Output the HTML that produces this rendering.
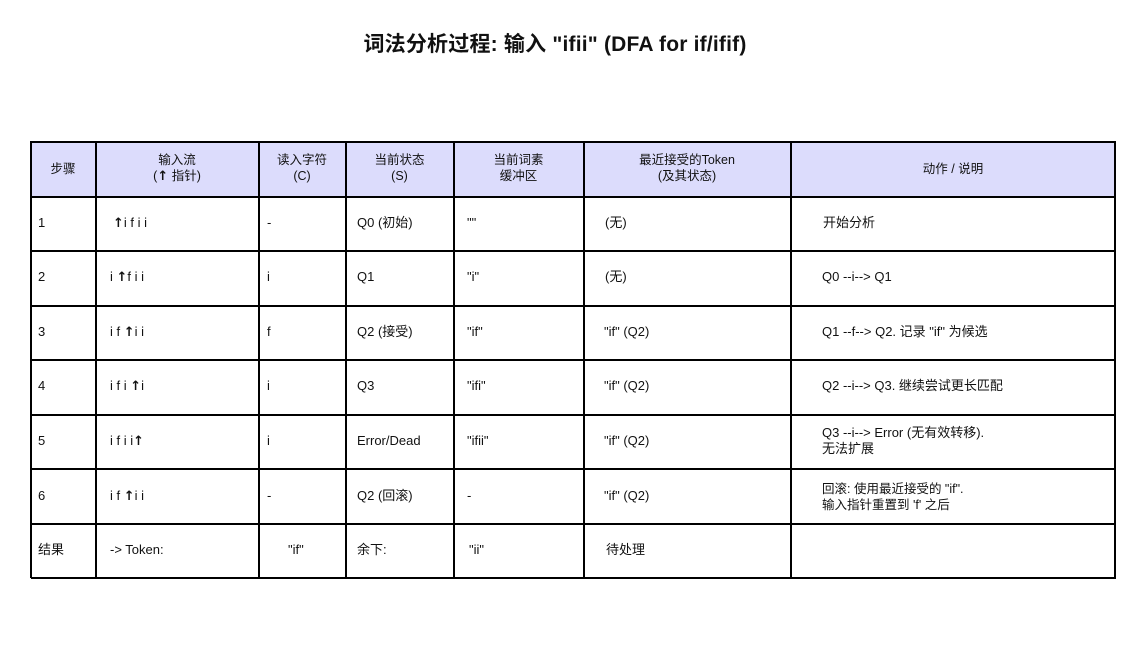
<!DOCTYPE html>
<html><head><meta charset="utf-8"><style>
body{margin:0;width:1145px;height:663px;background:#fff;position:relative;font-family:"Liberation Sans","Noto Sans CJK SC",sans-serif;color:#111;overflow:hidden}
.t{position:absolute;font-size:13px;white-space:nowrap;line-height:16px}
.h{position:absolute;font-size:12.5px;text-align:center;line-height:16px}
.v{position:absolute;top:141px;height:437px;width:1.5px;background:#000}
.r{position:absolute;left:31px;width:1085px;height:1.5px;background:#000}
b{font-family:"DejaVu Sans",sans-serif;font-size:13px}
</style></head><body>
<div style="position:absolute;top:28px;left:0;width:1110px;text-align:center;font-size:21px;font-weight:bold;letter-spacing:0.2px">词法分析过程: 输入 "ifii" (DFA for if/ifif)</div>
<div style="position:absolute;left:31px;top:141px;width:1084px;height:55px;background:#dcdcfc"></div>
<div class="r" style="top:141px"></div><div class="r" style="top:196px"></div><div class="r" style="top:250px"></div><div class="r" style="top:305px"></div><div class="r" style="top:359px"></div><div class="r" style="top:414px"></div><div class="r" style="top:468px"></div><div class="r" style="top:523px"></div><div class="r" style="top:577px"></div>
<div class="v" style="left:30px"></div><div class="v" style="left:95px"></div><div class="v" style="left:258px"></div><div class="v" style="left:345px"></div><div class="v" style="left:453px"></div><div class="v" style="left:583px"></div><div class="v" style="left:790px"></div><div class="v" style="left:1114px"></div>
<div class="h" style="left:31px;width:64px;top:161px">步骤</div>
<div class="h" style="left:96px;width:162px;top:152px">输入流<br>(<b>↑</b> 指针)</div>
<div class="h" style="left:259px;width:86px;top:152px">读入字符<br>(C)</div>
<div class="h" style="left:346px;width:107px;top:152px">当前状态<br>(S)</div>
<div class="h" style="left:454px;width:129px;top:152px">当前词素<br>缓冲区</div>
<div class="h" style="left:584px;width:206px;top:152px">最近接受的Token<br>(及其状态)</div>
<div class="h" style="left:791px;width:324px;top:161px">动作 / 说明</div>

<div class="t" style="left:38px;top:215px">1</div><div class="t" style="left:113px;top:215px"><b>↑</b>i f i i</div><div class="t" style="left:267px;top:215px">-</div><div class="t" style="left:357px;top:215px">Q0 (初始)</div><div class="t" style="left:467px;top:215px">""</div><div class="t" style="left:605px;top:215px">(无)</div><div class="t" style="left:823px;top:215px">开始分析</div>
<div class="t" style="left:38px;top:269px">2</div><div class="t" style="left:110px;top:269px">i <b>↑</b>f i i</div><div class="t" style="left:267px;top:269px">i</div><div class="t" style="left:357px;top:269px">Q1</div><div class="t" style="left:467px;top:269px">"i"</div><div class="t" style="left:605px;top:269px">(无)</div><div class="t" style="left:822px;top:269px">Q0 --i--&gt; Q1</div>
<div class="t" style="left:38px;top:324px">3</div><div class="t" style="left:110px;top:324px">i f <b>↑</b>i i</div><div class="t" style="left:267px;top:324px">f</div><div class="t" style="left:357px;top:324px">Q2 (接受)</div><div class="t" style="left:467px;top:324px">"if"</div><div class="t" style="left:604px;top:324px">"if" (Q2)</div><div class="t" style="left:822px;top:324px">Q1 --f--&gt; Q2. 记录 "if" 为候选</div>
<div class="t" style="left:38px;top:378px">4</div><div class="t" style="left:110px;top:378px">i f i <b>↑</b>i</div><div class="t" style="left:267px;top:378px">i</div><div class="t" style="left:357px;top:378px">Q3</div><div class="t" style="left:467px;top:378px">"ifi"</div><div class="t" style="left:604px;top:378px">"if" (Q2)</div><div class="t" style="left:822px;top:378px">Q2 --i--&gt; Q3. 继续尝试更长匹配</div>
<div class="t" style="left:38px;top:433px">5</div><div class="t" style="left:110px;top:433px">i f i i<b>↑</b></div><div class="t" style="left:267px;top:433px">i</div><div class="t" style="left:357px;top:433px">Error/Dead</div><div class="t" style="left:467px;top:433px">"ifii"</div><div class="t" style="left:604px;top:433px">"if" (Q2)</div><div class="t" style="left:822px;top:425px">Q3 --i--&gt; Error (无有效转移).<br>无法扩展</div>
<div class="t" style="left:38px;top:488px">6</div><div class="t" style="left:110px;top:488px">i f <b>↑</b>i i</div><div class="t" style="left:267px;top:488px">-</div><div class="t" style="left:357px;top:488px">Q2 (回滚)</div><div class="t" style="left:467px;top:488px">-</div><div class="t" style="left:604px;top:488px">"if" (Q2)</div><div class="t" style="left:822px;top:481px;font-size:12.5px">回滚: 使用最近接受的 "if".<br>输入指针重置到 'f' 之后</div>
<div class="t" style="left:38px;top:542px">结果</div><div class="t" style="left:110px;top:542px">-&gt; Token:</div><div class="t" style="left:288px;top:542px">"if"</div><div class="t" style="left:357px;top:542px">余下:</div><div class="t" style="left:469px;top:542px">"ii"</div><div class="t" style="left:606px;top:542px">待处理</div>
</body></html>
